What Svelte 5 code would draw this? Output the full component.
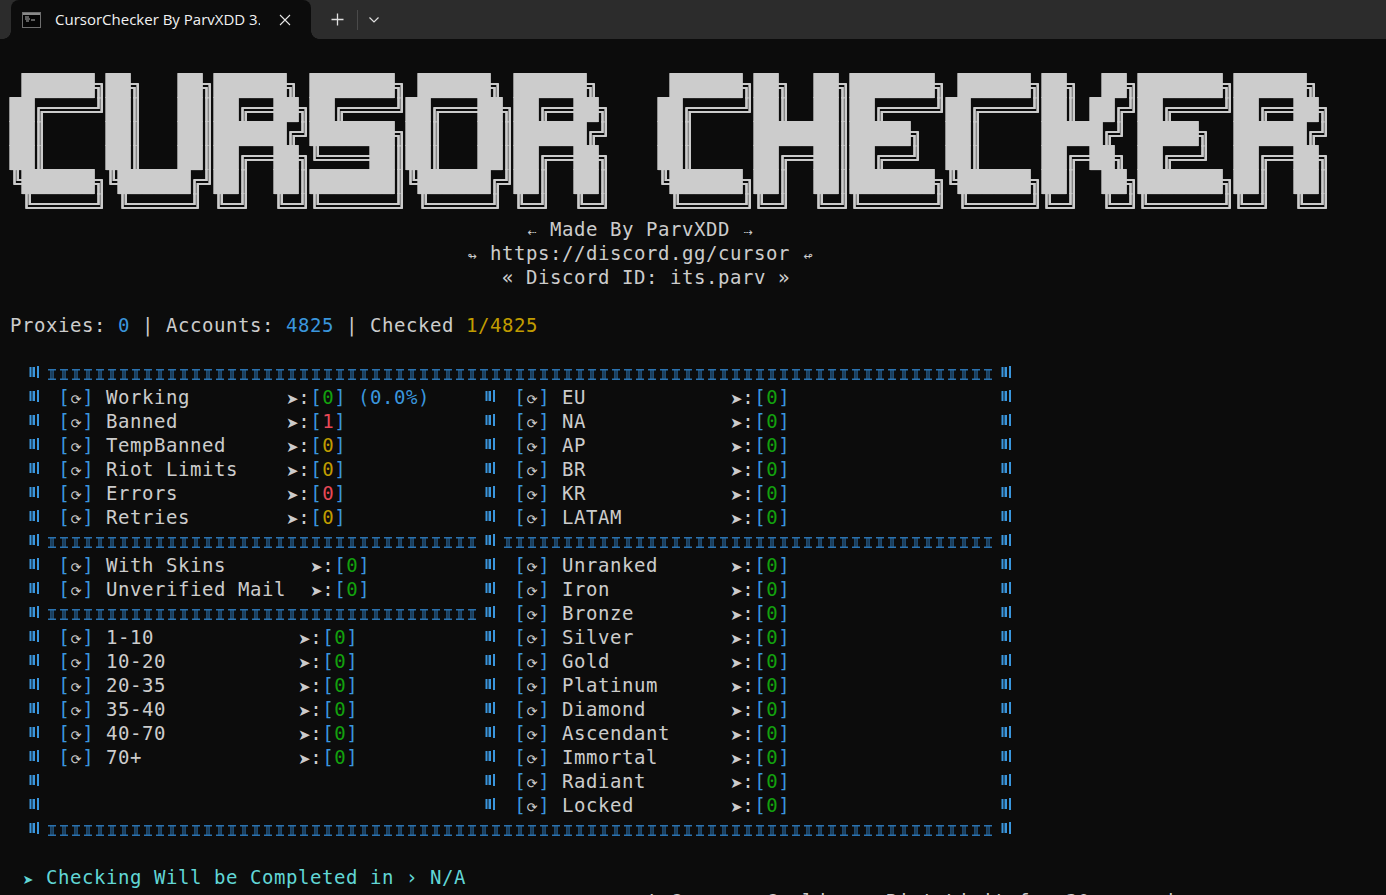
<script lang="ts">
	type Cell = { label: string; value: string; tone: string; width: number; extra?: string };

	const banner = [
		' ██████╗██╗   ██╗██████╗ ███████╗ ██████╗ ██████╗      ██████╗██╗  ██╗███████╗ ██████╗██╗  ██╗███████╗██████╗ ',
		'██╔════╝██║   ██║██╔══██╗██╔════╝██╔═══██╗██╔══██╗    ██╔════╝██║  ██║██╔════╝██╔════╝██║ ██╔╝██╔════╝██╔══██╗',
		'██║     ██║   ██║██████╔╝███████╗██║   ██║██████╔╝    ██║     ███████║█████╗  ██║     █████╔╝ █████╗  ██████╔╝',
		'██║     ██║   ██║██╔══██╗╚════██║██║   ██║██╔══██╗    ██║     ██╔══██║██╔══╝  ██║     ██╔═██╗ ██╔══╝  ██╔══██╗',
		'╚██████╗╚██████╔╝██║  ██║███████║╚██████╔╝██║  ██║    ╚██████╗██║  ██║███████╗╚██████╗██║  ██╗███████╗██║  ██║',
		' ╚═════╝ ╚═════╝ ╚═╝  ╚═╝╚══════╝ ╚═════╝ ╚═╝  ╚═╝     ╚═════╝╚═╝  ╚═╝╚══════╝ ╚═════╝╚═╝  ╚═╝╚══════╝╚═╝  ╚═╝'
	];

	const left = (label: string, value = '0', tone = 'green', width = 15, extra?: string): Cell => ({
		label,
		value,
		tone,
		width,
		extra
	});
	const right = (label: string): Cell => ({ label, value: '0', tone: 'green', width: 14 });

	// null = empty cell, 'rule' = horizontal divider
	const rows: [Cell | 'rule' | null, Cell | 'rule'][] = [
		[left('Working', '0', 'green', 15, '(0.0%)'), right('EU')],
		[left('Banned', '1', 'red'), right('NA')],
		[left('TempBanned', '0', 'yellow'), right('AP')],
		[left('Riot Limits', '0', 'yellow'), right('BR')],
		[left('Errors', '0', 'red'), right('KR')],
		[left('Retries', '0', 'yellow'), right('LATAM')],
		['rule', 'rule'],
		[left('With Skins', '0', 'green', 17), right('Unranked')],
		[left('Unverified Mail', '0', 'green', 17), right('Iron')],
		['rule', right('Bronze')],
		[left('1-10', '0', 'green', 16), right('Silver')],
		[left('10-20', '0', 'green', 16), right('Gold')],
		[left('20-35', '0', 'green', 16), right('Platinum')],
		[left('35-40', '0', 'green', 16), right('Diamond')],
		[left('40-70', '0', 'green', 16), right('Ascendant')],
		[left('70+', '0', 'green', 16), right('Immortal')],
		[null, right('Radiant')],
		[null, right('Locked')]
	];
</script>

{#snippet bar()}
	<svg class="bar" width="24" height="24" viewBox="0 0 24 24" fill="#3a96dd">
		<rect x="7.5" y="6" width="2" height="10" />
		<rect x="10.5" y="6" width="2.5" height="10" />
		<rect x="15" y="5" width="2" height="12" />
	</svg>
{/snippet}

{#snippet rule(cols: number)}
	<svg class="rule" width={cols * 12} height="24" fill="#2a72b0">
		<defs>
			<pattern id={'tick' + cols} width="12" height="24" patternUnits="userSpaceOnUse">
				<rect x="2" y="8" width="8" height="1.5" />
				<rect x="2" y="17.5" width="8" height="1.5" />
				<rect x="4.4" y="8" width="1.1" height="11" />
				<rect x="6.5" y="8" width="1.1" height="11" />
			</pattern>
		</defs>
		<rect width={cols * 12} height="24" fill={'url(#tick' + cols + ')'} />
	</svg>
{/snippet}

{#snippet cell(c: Cell)}
	<div class="cell"><span class="blue glyph">[</span><span class="spin">⟳</span><span class="blue glyph">]</span><span class="gap"></span><span class="label" style="width: {c.width * 12}px">{c.label}</span><span class="arrow">➤</span><span class="glyph">:</span><span class="blue glyph">[</span><span class="glyph {c.tone}">{c.value}</span><span class="blue glyph">]</span>{#if c.extra}<span class="gap"></span><span class="blue">{c.extra}</span>{/if}</div>
{/snippet}

<div class="window">
	<header class="titlebar">
		<div class="tab">
			<svg class="term-icon" width="19" height="16" viewBox="0 0 19 16">
				<rect x="0.5" y="0.5" width="18" height="15" fill="#050505" stroke="#6e6e6e" />
				<rect x="1" y="1" width="17" height="2" fill="#8a8a8a" />
				<path d="M3 5h4M3 7h5M4 9h3M9 8h4" stroke="#b5b5b5" stroke-width="1" fill="none" />
			</svg>
			<span class="title">CursorChecker By ParvXDD 3.</span>
			<svg class="close" width="12" height="12" viewBox="0 0 12 12">
				<path d="M1 1l10 10M11 1L1 11" stroke="#e6e6e6" stroke-width="1.1" fill="none" />
			</svg>
		</div>
		<button class="plus" aria-label="New tab">
			<svg width="13" height="13" viewBox="0 0 13 13">
				<path d="M6.5 0.5v12M0.5 6.5h12" stroke="#e0e0e0" stroke-width="1.3" fill="none" />
			</svg>
		</button>
		<span class="divider"></span>
		<button class="more" aria-label="More">
			<svg width="10" height="6" viewBox="0 0 10 6">
				<path d="M0.5 0.5L5 5l4.5-4.5" stroke="#e0e0e0" stroke-width="1.2" fill="none" />
			</svg>
		</button>
	</header>

	<main class="term">
		<div class="banner">
			{#each banner as line}
				<div class="banner-line">{line}</div>
			{/each}
		</div>

		<div class="credits">
			<div class="line"><span class="sym">⇠</span> Made By ParvXDD <span class="sym">⇢</span></div>
			<div class="line"><span class="sym">↬</span> https://discord.gg/cursor <span class="sym">↫</span></div>
			<div class="line nudge">« Discord ID: its.parv »</div>
		</div>

		<div class="stats line">Proxies: <span class="blue">0</span> | Accounts: <span class="blue">4825</span> | Checked <span class="yellow">1/4825</span></div>

		<section class="table">
			<div class="row wide">
				{@render bar()}
				{@render rule(79)}
				{@render bar()}
			</div>
			{#each rows as [a, b]}
				<div class="row">
					{@render bar()}
					{#if a === 'rule'}
						{@render rule(36)}
					{:else if a}
						{@render cell(a)}
					{:else}
						<div></div>
					{/if}
					{@render bar()}
					{#if b === 'rule'}
						{@render rule(41)}
					{:else}
						{@render cell(b)}
					{/if}
					{@render bar()}
				</div>
			{/each}
			<div class="row wide">
				{@render bar()}
				{@render rule(79)}
				{@render bar()}
			</div>
		</section>

		<div class="eta line"><span class="pointer">➤</span> Checking Will be Completed in › N/A</div>
		<div class="cooldown line">! Cursor  Cooldown  Riot Limit for 30 seconds</div>
	</main>
</div>

<style>
	:global(body) {
		background: #0c0c0c;
		overflow: hidden;
	}

	.window {
		height: 895px;
		overflow: hidden;
		background: #0c0c0c;
		color: #cccccc;
	}

	/* tab strip */

	.titlebar {
		height: 39px;
		background: #2c2c2c;
		display: flex;
		align-items: center;
		padding-left: 11px;
		font-family: 'Open Sans', 'Noto Sans', sans-serif;
	}

	.tab {
		position: relative;
		width: 300px;
		height: 39px;
		box-sizing: border-box;
		background: #0c0c0c;
		border-radius: 8px 8px 0 0;
		display: flex;
		align-items: center;
		padding: 0 20px 0 11px;
	}

	.tab::before,
	.tab::after {
		content: '';
		position: absolute;
		bottom: 0;
		width: 8px;
		height: 8px;
	}

	.tab::before {
		right: 100%;
		background: radial-gradient(circle at 0 0, transparent 7.5px, #0c0c0c 8px);
	}

	.tab::after {
		left: 100%;
		background: radial-gradient(circle at 100% 0, transparent 7.5px, #0c0c0c 8px);
	}

	.term-icon {
		flex: none;
		margin-right: 14px;
	}

	.title {
		width: 205px;
		overflow: hidden;
		white-space: nowrap;
		font-size: 15px;
		padding-bottom: 2px;
		color: #f2f2f2;
	}

	.close {
		flex: none;
		margin-left: auto;
	}

	.plus,
	.more {
		background: none;
		border: 0;
		padding: 0;
		display: flex;
		align-items: center;
		justify-content: center;
		height: 39px;
	}

	.plus {
		width: 46px;
		padding-left: 6px;
		box-sizing: border-box;
	}

	.divider {
		width: 1px;
		height: 20px;
		background: #4a4a4a;
	}

	.more {
		width: 32px;
	}

	/* terminal */

	.term {
		padding: 34px 0 0 10px;
		font-family: 'DejaVu Sans Mono', monospace;
		font-size: 19px;
		letter-spacing: 0.56px;
		line-height: 24px;
	}

	.line {
		height: 24px;
		white-space: pre;
	}

	.banner {
		height: 144px;
	}

	.banner-line {
		height: 24px;
		white-space: pre;
		font-size: 20px;
		letter-spacing: -0.04px;
		line-height: 24px;
		transform: translateY(1px) scaleY(1.05);
		will-change: transform;
		text-shadow: 0.5px 0 0 #cccccc, -0.5px 0 0 #cccccc;
	}

	.credits {
		width: 1260px;
		text-align: center;
	}

	.nudge {
		padding-left: 12px;
	}

	.sym {
		display: inline-block;
		width: 12px;
		line-height: 20px;
		font-family: 'DejaVu Sans', sans-serif;
		font-size: 11px;
		letter-spacing: 0;
		text-align: center;
	}

	.stats {
		margin-top: 24px;
	}

	.table {
		margin: 24px 0 0 12px;
	}

	.row {
		display: grid;
		grid-template-columns: 24px 432px 24px 492px 24px;
		height: 24px;
	}

	.row.wide {
		grid-template-columns: 24px 948px 24px;
	}

	.bar,
	.rule {
		display: block;
	}

	.cell {
		padding-left: 12px;
		white-space: nowrap;
	}

	.label {
		display: inline-block;
		white-space: pre;
	}

	.glyph {
		display: inline-block;
		width: 12px;
		letter-spacing: 0;
		text-align: center;
	}

	.gap {
		display: inline-block;
		width: 12px;
	}

	.spin {
		display: inline-block;
		width: 12px;
		font-family: 'DejaVu Sans', sans-serif;
		font-size: 13px;
		letter-spacing: 0;
		text-align: center;
	}

	.arrow {
		display: inline-block;
		width: 12px;
		font-family: 'DejaVu Sans', sans-serif;
		font-size: 15px;
		letter-spacing: 0;
		text-align: center;
	}

	.pointer {
		display: inline-block;
		width: 12px;
		font-family: 'DejaVu Sans', sans-serif;
		font-size: 13px;
		letter-spacing: 0;
		text-align: center;
	}

	.eta {
		margin: 24px 0 0 12px;
		color: #61d6d6;
	}

	.cooldown {
		margin-left: 636px;
	}

	.blue {
		color: #3a96dd;
	}

	.green {
		color: #13a10e;
	}

	.red {
		color: #e74856;
	}

	.yellow {
		color: #c19c00;
	}
</style>
